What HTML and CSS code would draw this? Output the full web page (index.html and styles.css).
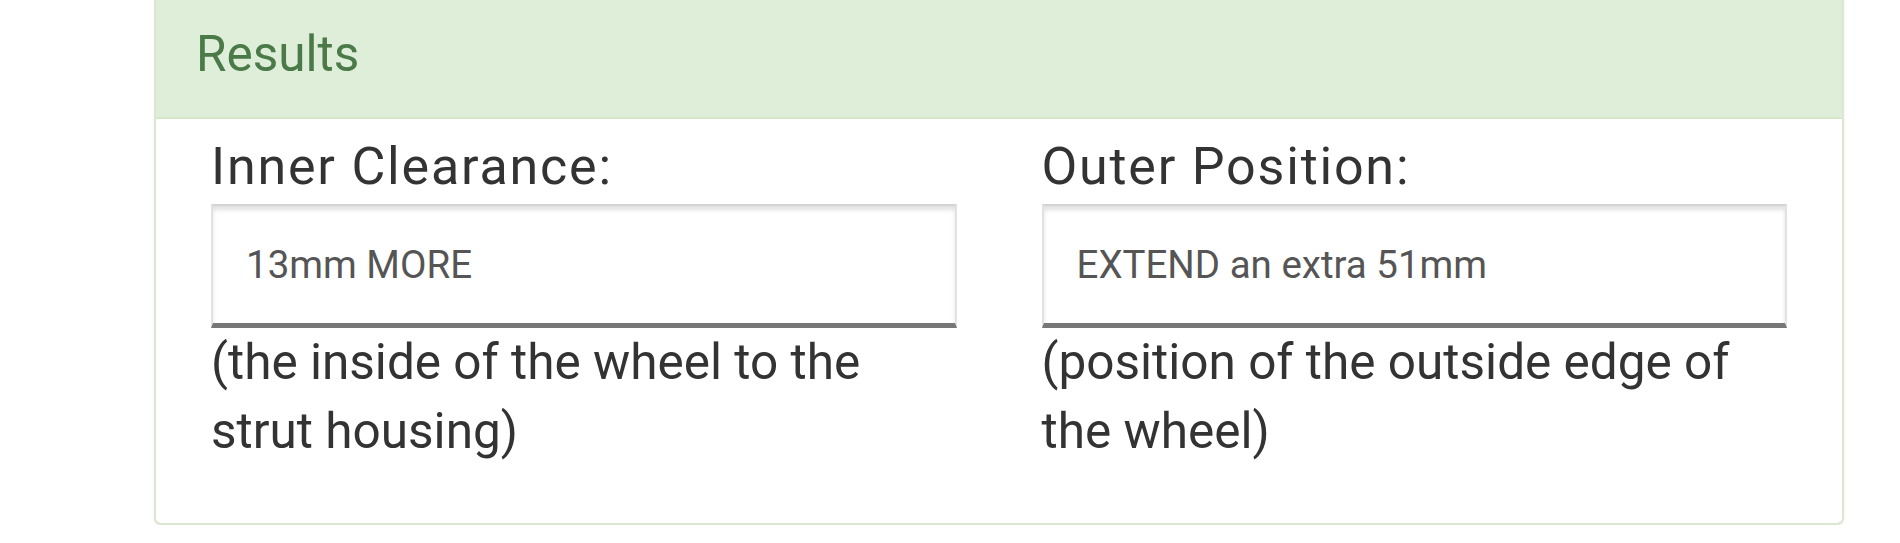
FILE: index.html
```html
<!DOCTYPE html>
<html lang="en">
<head>
    <meta charset="UTF-8">
    <meta name="viewport" content="width=device-width, initial-scale=1.0">
    <title>Results</title>
    <link rel="stylesheet" href="styles.css">
</head>
<body>
    <div class="page">
        <div class="panel panel-success">
            <div class="panel-heading">
                <h3 class="panel-title">Results</h3>
            </div>
            <div class="panel-body">
                <div class="result-row">
                    <div class="result-col">
                        <label class="result-label">Inner Clearance:</label>
                        <div class="result-box">13mm MORE</div>
                        <p class="help">(the inside of the wheel to the strut housing)</p>
                    </div>
                    <div class="result-col">
                        <label class="result-label">Outer Position:</label>
                        <div class="result-box">EXTEND an extra 51mm</div>
                        <p class="help">(position of the outside edge of the wheel)</p>
                    </div>
                </div>
            </div>
        </div>
    </div>
</body>
</html>
```

FILE: styles.css
```css
* {
    margin: 0;
    padding: 0;
    box-sizing: border-box;
}

body {
    font-family: Roboto, 'Liberation Sans', sans-serif;
    background-color: #fff;
    color: #333;
    overflow: hidden;
}

.page {
    padding: 0 56px 0 154px;
}

.panel {
    margin-top: -12px;
    background: #fff;
    border: 2px solid #dce6d2;
    border-radius: 7px;
    box-shadow: 0 2px 3px rgba(0,0,0,0.06);
    overflow: hidden;
}

.panel-heading {
    background-color: #dfeed9;
    border-bottom: 2px solid #d6e6c9;
    height: 129px;
    padding: 0 40px;
    display: flex;
    align-items: center;
}

.panel-title {
    font-size: 49.5px;
    font-weight: 400;
    color: #497a48;
}

.panel-body {
    padding: 17px 55px 57px;
}

.result-row {
    display: grid;
    grid-template-columns: 1fr 1fr;
    gap: 85px;
}

.result-label {
    display: block;
    font-size: 52px;
    line-height: 1.2;
    letter-spacing: 1.8px;
    font-weight: 400;
    margin-bottom: 6px;
}

.result-box {
    height: 124px;
    padding: 0 33px;
    display: flex;
    align-items: center;
    font-size: 38.5px;
    color: #555;
    border: 2px solid #e2e2e2;
    border-top-color: #d4d4d4;
    border-bottom: 5px solid #777;
    box-shadow: inset 0 4px 4px rgba(0,0,0,0.12);
}

.help {
    font-size: 49.5px;
    line-height: 69px;
}
```
